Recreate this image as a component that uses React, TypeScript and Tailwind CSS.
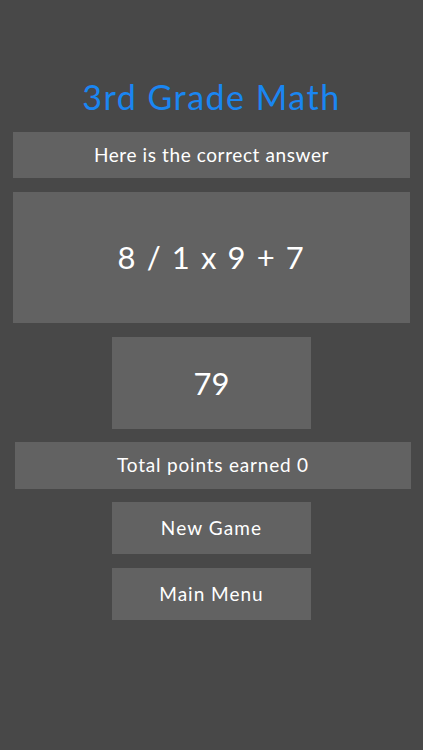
const font = { fontFamily: 'Lato, "Noto Sans", sans-serif' };

function Panel({ children, className }: { children: React.ReactNode; className: string }) {
  return (
    <div className={`flex items-center justify-center bg-[#626262] text-white ${className}`}>
      {children}
    </div>
  );
}

export default function App() {
  return (
    <div className="h-screen w-full bg-[#484848] flex flex-col px-[13px]" style={font}>
      <h1 className="mt-[75px] h-[44px] leading-[44px] text-center text-[34px] text-[#1a86f2] tracking-[1.5px]">
        3rd Grade Math
      </h1>

      <Panel className="mt-[13px] h-[46px] w-[397px] text-[19px] tracking-[0.6px]">
        Here is the correct answer
      </Panel>

      <Panel className="mt-[14px] h-[131px] w-[397px] text-[31px] tracking-[1.6px]">
        8 / 1 x 9 + 7
      </Panel>

      <Panel className="mt-[14px] h-[92px] w-[199px] self-start ml-[99px] text-[31px]">
        79
      </Panel>

      <Panel className="mt-[13px] h-[47px] w-[396px] ml-[2px] text-[19px] tracking-[0.8px]">
        Total points earned 0
      </Panel>

      <Panel className="mt-[13px] h-[52px] w-[199px] ml-[99px] text-[19px] tracking-[1.1px]">
        New Game
      </Panel>

      <Panel className="mt-[14px] h-[52px] w-[199px] ml-[99px] text-[19px] tracking-[1px]">
        Main Menu
      </Panel>
    </div>
  );
}
